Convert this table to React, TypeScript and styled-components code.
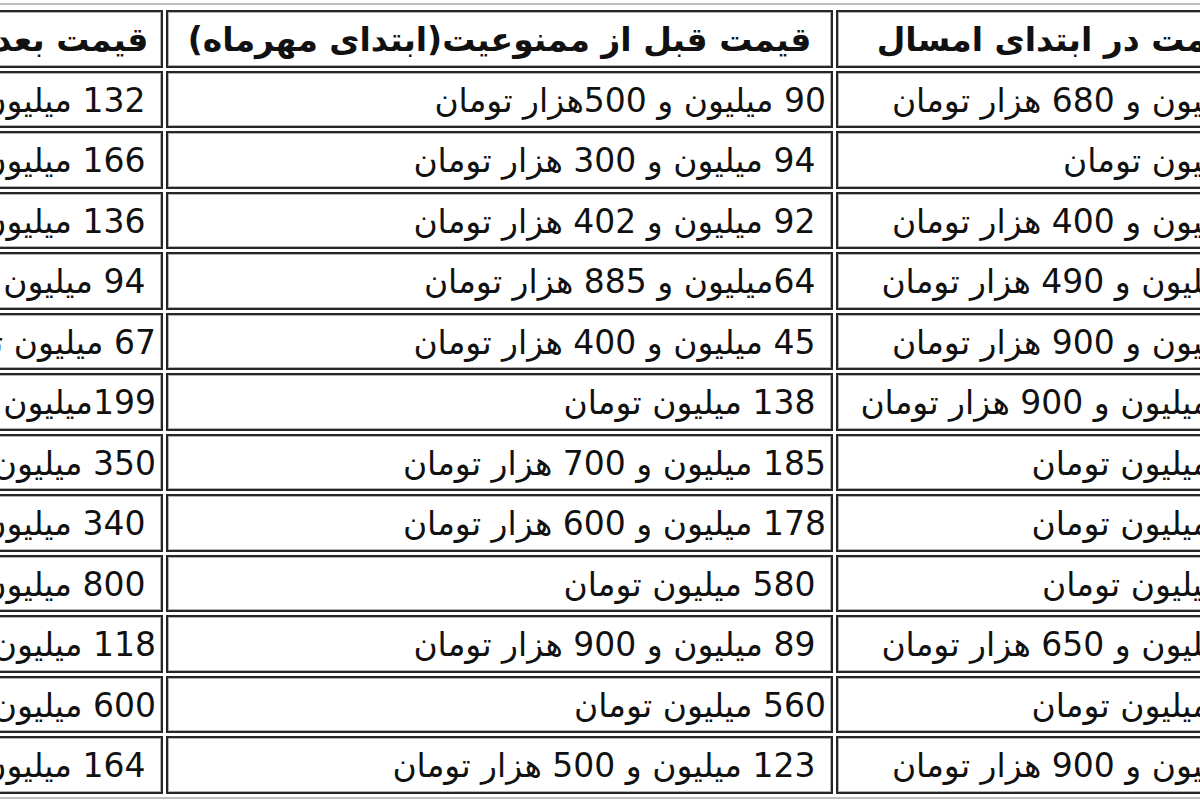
import React from "react";
import styled, { createGlobalStyle } from "styled-components";

const Global = createGlobalStyle`
  html, body { margin: 0; padding: 0; background: #ffffff; }
  #root { width: 1200px; height: 800px; }
`;

const Viewport = styled.div`
  width: 1200px;
  height: 800px;
  overflow: hidden;
  background: #ffffff;
`;

const Table = styled.table`
  direction: rtl;
  table-layout: fixed;
  width: 1547px;
  border-collapse: separate;
  border-spacing: 3px;
  margin: 3px 0 0 -226px;
  padding-top: 2px;
  border: 2px solid #bdbdbd;
  font-family: "DejaVu Sans", "Noto Sans", sans-serif;
  font-size: 33px;
  color: #111111;
`;

const Cell = styled.td<{ $w?: number; $head?: boolean; $padEnd?: number }>`
  box-sizing: border-box;
  width: ${(p) => (p.$w ? `${p.$w}px` : "auto")};
  height: 57.5px;
  padding: 2px ${(p) => p.$padEnd ?? 5}px 0 5px;
  border: 2px solid #262626;
  box-shadow: inset 0 0 0 1px #b3b3b3;
  white-space: nowrap;
  overflow: hidden;
  text-align: ${(p) => (p.$head ? "center" : "right")};
  font-weight: ${(p) => (p.$head ? 700 : 400)};
  vertical-align: middle;
  line-height: 1;
`;

const NB = "\u00a0";

const rows: [string, string, string][] = [
  ["91 میلیون و 680 هزار تومان", "90 میلیون و 500هزار تومان", NB + "132 میلیون تومان"],
  ["98 میلیون تومان", NB + "94 میلیون و 300 هزار تومان", NB + "166 میلیون تومان"],
  ["91 میلیون و 400 هزار تومان", NB + "92 میلیون و 402 هزار تومان", NB + "136 میلیون تومان"],
  [NB + "62 میلیون و 490 هزار تومان", NB + "64میلیون و 885 هزار تومان", NB + "94 میلیون تومان"],
  ["42 میلیون و 900 هزار تومان", NB + "45 میلیون و 400 هزار تومان", "67 میلیون تومان"],
  [NB + "128 میلیون و 900 هزار تومان", NB + "138 میلیون تومان", "199میلیون تومان"],
  [NB + "172 میلیون تومان", "185 میلیون و 700 هزار تومان", "350 میلیون تومان"],
  [NB + "168 میلیون تومان", "178 میلیون و 600 هزار تومان", NB + "340 میلیون تومان"],
  ["550 میلیون تومان", NB + "580 میلیون تومان", NB + "800 میلیون تومان"],
  [NB + "85 میلیون و 650 هزار تومان", NB + "89 میلیون و 900 هزار تومان", "118 میلیون تومان"],
  [NB + "530 میلیون تومان", "560 میلیون تومان", "600 میلیون تومان"],
  ["97 میلیون و 900 هزار تومان", NB + "123 میلیون و 500 هزار تومان", NB + "164 میلیون تومان"],
];

export default function App() {
  return (
    <>
      <Global />
      <Viewport>
        <Table>
          <tbody>
            <tr>
              <Cell as="th" $head $w={480} $padEnd={37}>قیمت در ابتدای امسال</Cell>
              <Cell as="th" $head $w={667}>قیمت قبل از ممنوعیت(ابتدای مهرماه)</Cell>
              <Cell as="th" $head $w={384}>قیمت بعد از ممنوعیت</Cell>
            </tr>
            {rows.map((r, i) => (
              <tr key={i}>
                <Cell $padEnd={20}>{r[0]}</Cell>
                <Cell>{r[1]}</Cell>
                <Cell>{r[2]}</Cell>
              </tr>
            ))}
          </tbody>
        </Table>
      </Viewport>
    </>
  );
}
